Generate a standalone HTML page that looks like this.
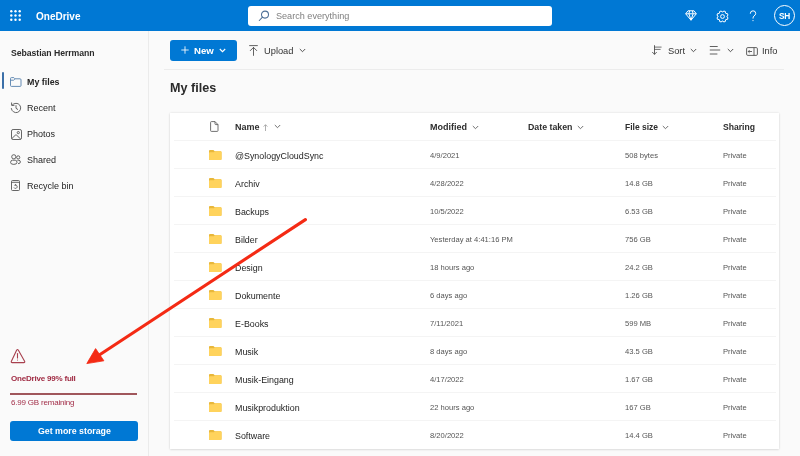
<!DOCTYPE html>
<html><head><meta charset="utf-8">
<style>
*{margin:0;padding:0;box-sizing:border-box}
html,body{width:800px;height:456px;overflow:hidden}
body{font-family:"Liberation Sans",sans-serif;background:#fafafa;position:relative;color:#242424}
.abs{position:absolute;white-space:nowrap}
#hdr{position:absolute;left:0;top:0;width:800px;height:31px;background:#0078d4}
#side{position:absolute;left:0;top:31px;width:149px;height:425px;background:#fafafa;border-right:1px solid #ebebeb}
#search{position:absolute;left:248px;top:6px;width:304px;height:20px;background:#fff;border-radius:3px}
.btn{position:absolute;background:#0078d4;border-radius:3px}
#card{position:absolute;left:170px;top:113px;width:609px;height:336px;background:#fff;box-shadow:0 0 2px rgba(0,0,0,.12),0 1px 2px rgba(0,0,0,.08)}
.row{position:absolute;left:4px;width:602px;height:28px;border-top:1px solid #f4f4f4}
.t{position:absolute;white-space:nowrap;line-height:1}
.t{will-change:transform}
</style></head><body>
<div id="hdr">
  <svg class="abs" style="left:10px;top:10px" width="11" height="11" viewBox="0 0 11 11" fill="#fff">
    <circle cx="1.3" cy="1.3" r="1.2"/><circle cx="5.5" cy="1.3" r="1.2"/><circle cx="9.7" cy="1.3" r="1.2"/>
    <circle cx="1.3" cy="5.5" r="1.2"/><circle cx="5.5" cy="5.5" r="1.2"/><circle cx="9.7" cy="5.5" r="1.2"/>
    <circle cx="1.3" cy="9.7" r="1.2"/><circle cx="5.5" cy="9.7" r="1.2"/><circle cx="9.7" cy="9.7" r="1.2"/>
  </svg>
  <div class="t" style="left:36px;top:11.5px;font-size:10px;font-weight:bold;color:#fff">OneDrive</div>
  <div id="search">
    <svg class="abs" style="left:9.5px;top:3px" width="12" height="13" viewBox="0 0 12 13" fill="none" stroke="#4d6f96" stroke-width="1.05" stroke-linecap="round"><circle cx="7" cy="5.6" r="3.5"/><path d="M4.5 8.1 L1.3 11.5"/></svg>
    <div class="t" style="left:28px;top:6px;font-size:9.1px;color:#808080">Search everything</div>
  </div>
  <!-- diamond -->
  <svg class="abs" style="left:685px;top:10px" width="12" height="11" viewBox="0 0 12 11" fill="none" stroke="#fff" stroke-width="1" stroke-linejoin="round">
    <path d="M3 0.8 H9 L11.3 3.8 L6 10.2 L0.7 3.8 Z M0.7 3.8 H11.3 M4.6 0.8 L3.9 3.8 L6 10.2 L8.1 3.8 L7.4 0.8"/>
  </svg>
  <!-- gear -->
  <svg class="abs" style="left:715.5px;top:9.5px" width="13" height="13" viewBox="0 0 13 13" fill="none" stroke="#fff" stroke-width="1" stroke-linejoin="round">
    <path d="M10.98 6.92 L12.06 7.76 L11.32 9.54 L9.96 9.37 L9.37 9.96 L9.54 11.32 L7.76 12.06 L6.92 10.98 L6.08 10.98 L5.24 12.06 L3.46 11.32 L3.63 9.96 L3.04 9.37 L1.68 9.54 L0.94 7.76 L2.02 6.92 L2.02 6.08 L0.94 5.24 L1.68 3.46 L3.04 3.63 L3.63 3.04 L3.46 1.68 L5.24 0.94 L6.08 2.02 L6.92 2.02 L7.76 0.94 L9.54 1.68 L9.37 3.04 L9.96 3.63 L11.32 3.46 L12.06 5.24 L10.98 6.08 Z"/>
    <circle cx="6.5" cy="6.5" r="1.9"/>
  </svg>
  <svg class="abs" style="left:748px;top:9px" width="10" height="14" viewBox="0 0 10 14" fill="none" stroke="#fff" stroke-width="1" stroke-linecap="round"><path d="M2.3 4.3 Q2.3 1.8 5 1.8 Q7.7 1.8 7.7 4.4 Q7.7 6 5.9 7.1 Q5 7.7 5 9.2"/><circle cx="5" cy="11.6" r="0.6" fill="#fff" stroke="none"/></svg>
  <div class="abs" style="left:774px;top:5px;width:21px;height:21px;border:1px solid #fff;border-radius:50%"></div>
  <div class="t" style="left:779px;top:12px;font-size:8.3px;font-weight:bold;color:#fff;letter-spacing:-0.2px">SH</div>
</div>

<div id="side">
  <div class="t" style="left:11px;top:18px;font-size:8.7px;font-weight:bold;color:#2b2b2b;letter-spacing:-0.05px">Sebastian Herrmann</div>
  <div class="abs" style="left:2px;top:41px;width:2px;height:17px;background:#3b6fa8;border-radius:1px"></div>
  <!-- folder outline -->
  <svg class="abs" style="left:10px;top:45.5px" width="11.5" height="10" viewBox="0 0 11.5 10" fill="none" stroke="#5580ad" stroke-width="0.9">
    <path d="M0.5 1.6 Q0.5 0.6 1.5 0.6 H3.8 L5 1.8 H10 Q11 1.8 11 2.8 V8.5 Q11 9.4 10 9.4 H1.5 Q0.5 9.4 0.5 8.5 Z M0.5 3.2 H3.6 L5 1.8"/>
  </svg>
  <div class="t" style="left:27px;top:46.6px;font-size:8.9px;font-weight:bold;color:#242424">My files</div>
  <!-- recent -->
  <svg class="abs" style="left:10px;top:71px" width="12" height="12" viewBox="0 0 12 12" fill="none" stroke="#555" stroke-width="0.9" stroke-linecap="round"><path d="M2.3 3 A4.7 4.7 0 1 1 1.3 6.5"/><path d="M1.6 0.9 V3.4 H4"/><path d="M6 3.6 V6.3 L7.7 7.4"/></svg>
  <div class="t" style="left:27px;top:72.6px;font-size:9px;color:#242424">Recent</div>
  <!-- photos -->
  <svg class="abs" style="left:10.5px;top:97.5px" width="11" height="11" viewBox="0 0 11 11" fill="none" stroke="#555" stroke-width="0.9"><rect x="0.5" y="0.5" width="10" height="10" rx="1.6"/><circle cx="7.3" cy="3.6" r="1.1"/><path d="M0.8 9.6 L4.3 6.2 Q5 5.6 5.7 6.2 L9.6 10"/></svg>
  <div class="t" style="left:27px;top:98.6px;font-size:9px;color:#242424">Photos</div>
  <!-- shared -->
  <svg class="abs" style="left:10px;top:123px" width="11" height="11" viewBox="0 0 11 11" fill="none" stroke="#555" stroke-width="0.9"><circle cx="3.8" cy="2.8" r="2.1"/><circle cx="8.2" cy="3.4" r="1.6"/><path d="M0.6 8.6 Q0.6 6.2 2.4 6.2 H5.2 Q7 6.2 7 8.4 Q7 10.4 3.8 10.4 Q0.6 10.4 0.6 8.6 Z"/><path d="M7.4 6.3 H8.8 Q10.4 6.3 10.4 8 Q10.4 9.6 8 9.7"/></svg>
  <div class="t" style="left:27px;top:124.6px;font-size:9px;color:#242424">Shared</div>
  <!-- recycle -->
  <svg class="abs" style="left:11px;top:149px" width="9" height="11" viewBox="0 0 9 11" fill="none" stroke="#555" stroke-width="0.9"><path d="M0.5 1.5 Q0.5 0.5 1.5 0.5 H7.5 Q8.5 0.5 8.5 1.5 V9.5 Q8.5 10.5 7.5 10.5 H1.5 Q0.5 10.5 0.5 9.5 Z M0.5 2.3 H8.5"/><path d="M3 7.6 A1.7 1.7 0 1 0 4.5 5 M4.6 4.1 V5.3 H3.4"/></svg>
  <div class="t" style="left:27px;top:150.6px;font-size:9px;color:#242424">Recycle bin</div>

  <!-- warning -->
  <svg class="abs" style="left:9.5px;top:317px" width="16" height="16" viewBox="0 0 16 16" fill="none" stroke="#a8404e" stroke-width="1.1" stroke-linejoin="round" stroke-linecap="round">
    <path d="M6.6 2.2 Q7.5 0.9 8.4 2.2 L14.6 13.2 Q15.2 14.6 13.8 14.6 H2.2 Q0.8 14.6 1.4 13.2 Z"/><path d="M7.5 5.6 V10"/><circle cx="7.5" cy="12" r="0.55" fill="#a8404e" stroke="none"/>
  </svg>
  <div class="t" style="left:11px;top:344px;font-size:8px;font-weight:bold;color:#a02c44;letter-spacing:-0.2px">OneDrive 99% full</div>
  <div class="abs" style="left:10px;top:362px;width:127px;height:2px;background:#a0565b"></div>
  <div class="t" style="left:11px;top:368px;font-size:8px;color:#a3304a;letter-spacing:-0.2px">6.99 GB remaining</div>
  <div class="btn" style="left:10px;top:390px;width:128px;height:20px;background:#0078d4">
    <div class="t" style="left:28px;top:6px;font-size:8.8px;font-weight:bold;color:#fff">Get more storage</div>
  </div>
</div>

<div id="main">
<div class="btn" style="left:170px;top:40px;width:67px;height:21px;background:#0078d4">
<svg class="abs" style="left:11px;top:6px" width="8" height="8" viewBox="0 0 8 8" stroke="#fff" stroke-width="0.85"><path d="M4 0.3 V7.7 M0.3 4 H7.7"/></svg>
<div class="t" style="left:24px;top:6px;font-size:9.6px;font-weight:bold;color:#fff">New</div>
<svg class="abs" style="left:49px;top:8px" width="7" height="5" viewBox="0 0 7 5" fill="none" stroke="#fff" stroke-width="1.1"><path d="M0.8 1 L3.5 3.7 L6.2 1"/></svg>
</div>
<svg class="abs" style="left:249px;top:45px" width="9" height="11" viewBox="0 0 9 11" fill="none" stroke="#505050" stroke-width="0.9" stroke-linecap="round"><path d="M0.6 0.6 H8.4 M4.5 10.4 V2.4 M1.3 5.6 L4.5 2.4 L7.7 5.6"/></svg>
<div class="t" style="left:264px;top:47px;font-size:9.3px;color:#333">Upload</div>
<svg class="abs" style="left:299px;top:48px" width="7" height="5" viewBox="0 0 7 5" fill="none" stroke="#424242" stroke-width="0.9"><path d="M0.8 1 L3.5 3.7 L6.2 1"/></svg>
<svg class="abs" style="left:651px;top:45px" width="12" height="11" viewBox="0 0 12 11" fill="none" stroke="#505050" stroke-width="0.9" stroke-linecap="round"><path d="M3.5 0.6 V9.2 M1.5 7.3 L3.5 9.3 L5.5 7.3"/><path d="M3.5 2.1 H10.2 M3.5 4.4 H9.2" stroke-width="0.8"/></svg>
<div class="t" style="left:668px;top:47px;font-size:9.3px;color:#333">Sort</div>
<svg class="abs" style="left:690px;top:48px" width="7" height="5" viewBox="0 0 7 5" fill="none" stroke="#424242" stroke-width="0.9"><path d="M0.8 1 L3.5 3.7 L6.2 1"/></svg>
<svg class="abs" style="left:709px;top:45px" width="12" height="11" viewBox="0 0 12 11" fill="none" stroke="#505050" stroke-width="0.9" stroke-linecap="round"><path d="M1.2 1.5 H8.3 M1.2 5 H10.8 M1.2 9 H8"/></svg>
<svg class="abs" style="left:727px;top:48px" width="7" height="5" viewBox="0 0 7 5" fill="none" stroke="#424242" stroke-width="0.9"><path d="M0.8 1 L3.5 3.7 L6.2 1"/></svg>
<svg class="abs" style="left:745.5px;top:46.5px" width="12" height="9" viewBox="0 0 12 9" fill="none" stroke="#505050" stroke-width="0.9"><rect x="0.6" y="0.6" width="10.8" height="7.8" rx="1.2"/><path d="M8 0.6 V8.4 M2.2 4.5 H6 M3.6 3.1 L2.2 4.5 L3.6 5.9"/></svg>
<div class="t" style="left:762px;top:47px;font-size:9.3px;color:#333">Info</div>
<div class="abs" style="left:164px;top:69px;width:620px;height:1px;background:#ececec"></div>
<div class="t" style="left:170px;top:81.5px;font-size:12.6px;font-weight:bold;color:#2a2a2a">My files</div>
<div id="card">
<svg class="abs" style="left:40px;top:8px" width="9" height="11" viewBox="0 0 9 11" fill="none" stroke="#616161" stroke-width="0.9" stroke-linejoin="round"><path d="M0.6 1.4 Q0.6 0.6 1.4 0.6 H5 L8 3.6 V9.6 Q8 10.4 7.2 10.4 H1.4 Q0.6 10.4 0.6 9.6 Z M5 0.6 V2.8 Q5 3.6 5.8 3.6 H8"/></svg>
<div class="t" style="left:65px;top:10px;font-size:9.0px;font-weight:bold;color:#2e2e2e">Name</div>
<svg class="abs" style="left:93px;top:11px" width="5" height="7" viewBox="0 0 5 7" fill="none" stroke="#9a9a9a" stroke-width="0.8"><path d="M2.5 7 V0.8 M0.6 2.6 L2.5 0.7 L4.4 2.6"/></svg>
<svg class="abs" style="left:104px;top:11px" width="7" height="5" viewBox="0 0 7 5" fill="none" stroke="#616161" stroke-width="0.9"><path d="M0.8 1 L3.5 3.7 L6.2 1"/></svg>
<div class="t" style="left:260px;top:10px;font-size:9.0px;font-weight:bold;color:#2e2e2e">Modified</div>
<svg class="abs" style="left:302px;top:11.5px" width="7" height="5" viewBox="0 0 7 5" fill="none" stroke="#616161" stroke-width="0.9"><path d="M0.8 1 L3.5 3.7 L6.2 1"/></svg>
<div class="t" style="left:358px;top:10px;font-size:8.8px;font-weight:bold;color:#2e2e2e">Date taken</div>
<svg class="abs" style="left:407px;top:11.5px" width="7" height="5" viewBox="0 0 7 5" fill="none" stroke="#616161" stroke-width="0.9"><path d="M0.8 1 L3.5 3.7 L6.2 1"/></svg>
<div class="t" style="left:455px;top:10px;font-size:8.5px;font-weight:bold;color:#2e2e2e">File size</div>
<svg class="abs" style="left:492px;top:11.5px" width="7" height="5" viewBox="0 0 7 5" fill="none" stroke="#616161" stroke-width="0.9"><path d="M0.8 1 L3.5 3.7 L6.2 1"/></svg>
<div class="t" style="left:553px;top:10px;font-size:8.6px;font-weight:bold;color:#2e2e2e">Sharing</div>
<div class="row" style="top:27px"><svg class="abs" style="left:35px;top:9px" width="12.5" height="10" viewBox="0 0 13 10" preserveAspectRatio="none"><path d="M0 1 Q0 0 1 0 H4.6 L6 1.3 H12 Q13 1.3 13 2.3 V9 Q13 10 12 10 H1 Q0 10 0 9 Z" fill="#e8b73a"/><path d="M0 3 Q0 2.2 1 2.2 H5 L6.2 1.3 H12 Q13 1.3 13 2.3 V9 Q13 10 12 10 H1 Q0 10 0 9 Z" fill="#ffd35c"/></svg><div class="t" style="left:61px;top:11px;font-size:8.9px;color:#242424">@SynologyCloudSync</div><div class="t" style="left:256px;top:11px;font-size:7.6px;color:#555">4/9/2021</div><div class="t" style="left:451px;top:11px;font-size:7.6px;color:#555">508 bytes</div><div class="t" style="left:549px;top:11px;font-size:7.6px;color:#555">Private</div></div>
<div class="row" style="top:55px"><svg class="abs" style="left:35px;top:9px" width="12.5" height="10" viewBox="0 0 13 10" preserveAspectRatio="none"><path d="M0 1 Q0 0 1 0 H4.6 L6 1.3 H12 Q13 1.3 13 2.3 V9 Q13 10 12 10 H1 Q0 10 0 9 Z" fill="#e8b73a"/><path d="M0 3 Q0 2.2 1 2.2 H5 L6.2 1.3 H12 Q13 1.3 13 2.3 V9 Q13 10 12 10 H1 Q0 10 0 9 Z" fill="#ffd35c"/></svg><div class="t" style="left:61px;top:11px;font-size:8.9px;color:#242424">Archiv</div><div class="t" style="left:256px;top:11px;font-size:7.6px;color:#555">4/28/2022</div><div class="t" style="left:451px;top:11px;font-size:7.6px;color:#555">14.8 GB</div><div class="t" style="left:549px;top:11px;font-size:7.6px;color:#555">Private</div></div>
<div class="row" style="top:83px"><svg class="abs" style="left:35px;top:9px" width="12.5" height="10" viewBox="0 0 13 10" preserveAspectRatio="none"><path d="M0 1 Q0 0 1 0 H4.6 L6 1.3 H12 Q13 1.3 13 2.3 V9 Q13 10 12 10 H1 Q0 10 0 9 Z" fill="#e8b73a"/><path d="M0 3 Q0 2.2 1 2.2 H5 L6.2 1.3 H12 Q13 1.3 13 2.3 V9 Q13 10 12 10 H1 Q0 10 0 9 Z" fill="#ffd35c"/></svg><div class="t" style="left:61px;top:11px;font-size:8.9px;color:#242424">Backups</div><div class="t" style="left:256px;top:11px;font-size:7.6px;color:#555">10/5/2022</div><div class="t" style="left:451px;top:11px;font-size:7.6px;color:#555">6.53 GB</div><div class="t" style="left:549px;top:11px;font-size:7.6px;color:#555">Private</div></div>
<div class="row" style="top:111px"><svg class="abs" style="left:35px;top:9px" width="12.5" height="10" viewBox="0 0 13 10" preserveAspectRatio="none"><path d="M0 1 Q0 0 1 0 H4.6 L6 1.3 H12 Q13 1.3 13 2.3 V9 Q13 10 12 10 H1 Q0 10 0 9 Z" fill="#e8b73a"/><path d="M0 3 Q0 2.2 1 2.2 H5 L6.2 1.3 H12 Q13 1.3 13 2.3 V9 Q13 10 12 10 H1 Q0 10 0 9 Z" fill="#ffd35c"/></svg><div class="t" style="left:61px;top:11px;font-size:8.9px;color:#242424">Bilder</div><div class="t" style="left:256px;top:11px;font-size:7.6px;color:#555">Yesterday at 4:41:16 PM</div><div class="t" style="left:451px;top:11px;font-size:7.6px;color:#555">756 GB</div><div class="t" style="left:549px;top:11px;font-size:7.6px;color:#555">Private</div></div>
<div class="row" style="top:139px"><svg class="abs" style="left:35px;top:9px" width="12.5" height="10" viewBox="0 0 13 10" preserveAspectRatio="none"><path d="M0 1 Q0 0 1 0 H4.6 L6 1.3 H12 Q13 1.3 13 2.3 V9 Q13 10 12 10 H1 Q0 10 0 9 Z" fill="#e8b73a"/><path d="M0 3 Q0 2.2 1 2.2 H5 L6.2 1.3 H12 Q13 1.3 13 2.3 V9 Q13 10 12 10 H1 Q0 10 0 9 Z" fill="#ffd35c"/></svg><div class="t" style="left:61px;top:11px;font-size:8.9px;color:#242424">Design</div><div class="t" style="left:256px;top:11px;font-size:7.6px;color:#555">18 hours ago</div><div class="t" style="left:451px;top:11px;font-size:7.6px;color:#555">24.2 GB</div><div class="t" style="left:549px;top:11px;font-size:7.6px;color:#555">Private</div></div>
<div class="row" style="top:167px"><svg class="abs" style="left:35px;top:9px" width="12.5" height="10" viewBox="0 0 13 10" preserveAspectRatio="none"><path d="M0 1 Q0 0 1 0 H4.6 L6 1.3 H12 Q13 1.3 13 2.3 V9 Q13 10 12 10 H1 Q0 10 0 9 Z" fill="#e8b73a"/><path d="M0 3 Q0 2.2 1 2.2 H5 L6.2 1.3 H12 Q13 1.3 13 2.3 V9 Q13 10 12 10 H1 Q0 10 0 9 Z" fill="#ffd35c"/></svg><div class="t" style="left:61px;top:11px;font-size:8.9px;color:#242424">Dokumente</div><div class="t" style="left:256px;top:11px;font-size:7.6px;color:#555">6 days ago</div><div class="t" style="left:451px;top:11px;font-size:7.6px;color:#555">1.26 GB</div><div class="t" style="left:549px;top:11px;font-size:7.6px;color:#555">Private</div></div>
<div class="row" style="top:195px"><svg class="abs" style="left:35px;top:9px" width="12.5" height="10" viewBox="0 0 13 10" preserveAspectRatio="none"><path d="M0 1 Q0 0 1 0 H4.6 L6 1.3 H12 Q13 1.3 13 2.3 V9 Q13 10 12 10 H1 Q0 10 0 9 Z" fill="#e8b73a"/><path d="M0 3 Q0 2.2 1 2.2 H5 L6.2 1.3 H12 Q13 1.3 13 2.3 V9 Q13 10 12 10 H1 Q0 10 0 9 Z" fill="#ffd35c"/></svg><div class="t" style="left:61px;top:11px;font-size:8.9px;color:#242424">E-Books</div><div class="t" style="left:256px;top:11px;font-size:7.6px;color:#555">7/11/2021</div><div class="t" style="left:451px;top:11px;font-size:7.6px;color:#555">599 MB</div><div class="t" style="left:549px;top:11px;font-size:7.6px;color:#555">Private</div></div>
<div class="row" style="top:223px"><svg class="abs" style="left:35px;top:9px" width="12.5" height="10" viewBox="0 0 13 10" preserveAspectRatio="none"><path d="M0 1 Q0 0 1 0 H4.6 L6 1.3 H12 Q13 1.3 13 2.3 V9 Q13 10 12 10 H1 Q0 10 0 9 Z" fill="#e8b73a"/><path d="M0 3 Q0 2.2 1 2.2 H5 L6.2 1.3 H12 Q13 1.3 13 2.3 V9 Q13 10 12 10 H1 Q0 10 0 9 Z" fill="#ffd35c"/></svg><div class="t" style="left:61px;top:11px;font-size:8.9px;color:#242424">Musik</div><div class="t" style="left:256px;top:11px;font-size:7.6px;color:#555">8 days ago</div><div class="t" style="left:451px;top:11px;font-size:7.6px;color:#555">43.5 GB</div><div class="t" style="left:549px;top:11px;font-size:7.6px;color:#555">Private</div></div>
<div class="row" style="top:251px"><svg class="abs" style="left:35px;top:9px" width="12.5" height="10" viewBox="0 0 13 10" preserveAspectRatio="none"><path d="M0 1 Q0 0 1 0 H4.6 L6 1.3 H12 Q13 1.3 13 2.3 V9 Q13 10 12 10 H1 Q0 10 0 9 Z" fill="#e8b73a"/><path d="M0 3 Q0 2.2 1 2.2 H5 L6.2 1.3 H12 Q13 1.3 13 2.3 V9 Q13 10 12 10 H1 Q0 10 0 9 Z" fill="#ffd35c"/></svg><div class="t" style="left:61px;top:11px;font-size:8.9px;color:#242424">Musik-Eingang</div><div class="t" style="left:256px;top:11px;font-size:7.6px;color:#555">4/17/2022</div><div class="t" style="left:451px;top:11px;font-size:7.6px;color:#555">1.67 GB</div><div class="t" style="left:549px;top:11px;font-size:7.6px;color:#555">Private</div></div>
<div class="row" style="top:279px"><svg class="abs" style="left:35px;top:9px" width="12.5" height="10" viewBox="0 0 13 10" preserveAspectRatio="none"><path d="M0 1 Q0 0 1 0 H4.6 L6 1.3 H12 Q13 1.3 13 2.3 V9 Q13 10 12 10 H1 Q0 10 0 9 Z" fill="#e8b73a"/><path d="M0 3 Q0 2.2 1 2.2 H5 L6.2 1.3 H12 Q13 1.3 13 2.3 V9 Q13 10 12 10 H1 Q0 10 0 9 Z" fill="#ffd35c"/></svg><div class="t" style="left:61px;top:11px;font-size:8.9px;color:#242424">Musikproduktion</div><div class="t" style="left:256px;top:11px;font-size:7.6px;color:#555">22 hours ago</div><div class="t" style="left:451px;top:11px;font-size:7.6px;color:#555">167 GB</div><div class="t" style="left:549px;top:11px;font-size:7.6px;color:#555">Private</div></div>
<div class="row" style="top:307px"><svg class="abs" style="left:35px;top:9px" width="12.5" height="10" viewBox="0 0 13 10" preserveAspectRatio="none"><path d="M0 1 Q0 0 1 0 H4.6 L6 1.3 H12 Q13 1.3 13 2.3 V9 Q13 10 12 10 H1 Q0 10 0 9 Z" fill="#e8b73a"/><path d="M0 3 Q0 2.2 1 2.2 H5 L6.2 1.3 H12 Q13 1.3 13 2.3 V9 Q13 10 12 10 H1 Q0 10 0 9 Z" fill="#ffd35c"/></svg><div class="t" style="left:61px;top:11px;font-size:8.9px;color:#242424">Software</div><div class="t" style="left:256px;top:11px;font-size:7.6px;color:#555">8/20/2022</div><div class="t" style="left:451px;top:11px;font-size:7.6px;color:#555">14.4 GB</div><div class="t" style="left:549px;top:11px;font-size:7.6px;color:#555">Private</div></div>

</div>
</div>
<svg class="abs" style="left:0;top:0" width="800" height="456" viewBox="0 0 800 456"><path d="M305.4 219.6 L97 356.5" stroke="#f42a14" stroke-width="3.1" stroke-linecap="round"/><path d="M86.8 363.6 L95.6 348.6 L103.9 360.8 Z" fill="#f42a14" stroke="#f42a14" stroke-width="0.8" stroke-linejoin="round"/></svg>
</body></html>
